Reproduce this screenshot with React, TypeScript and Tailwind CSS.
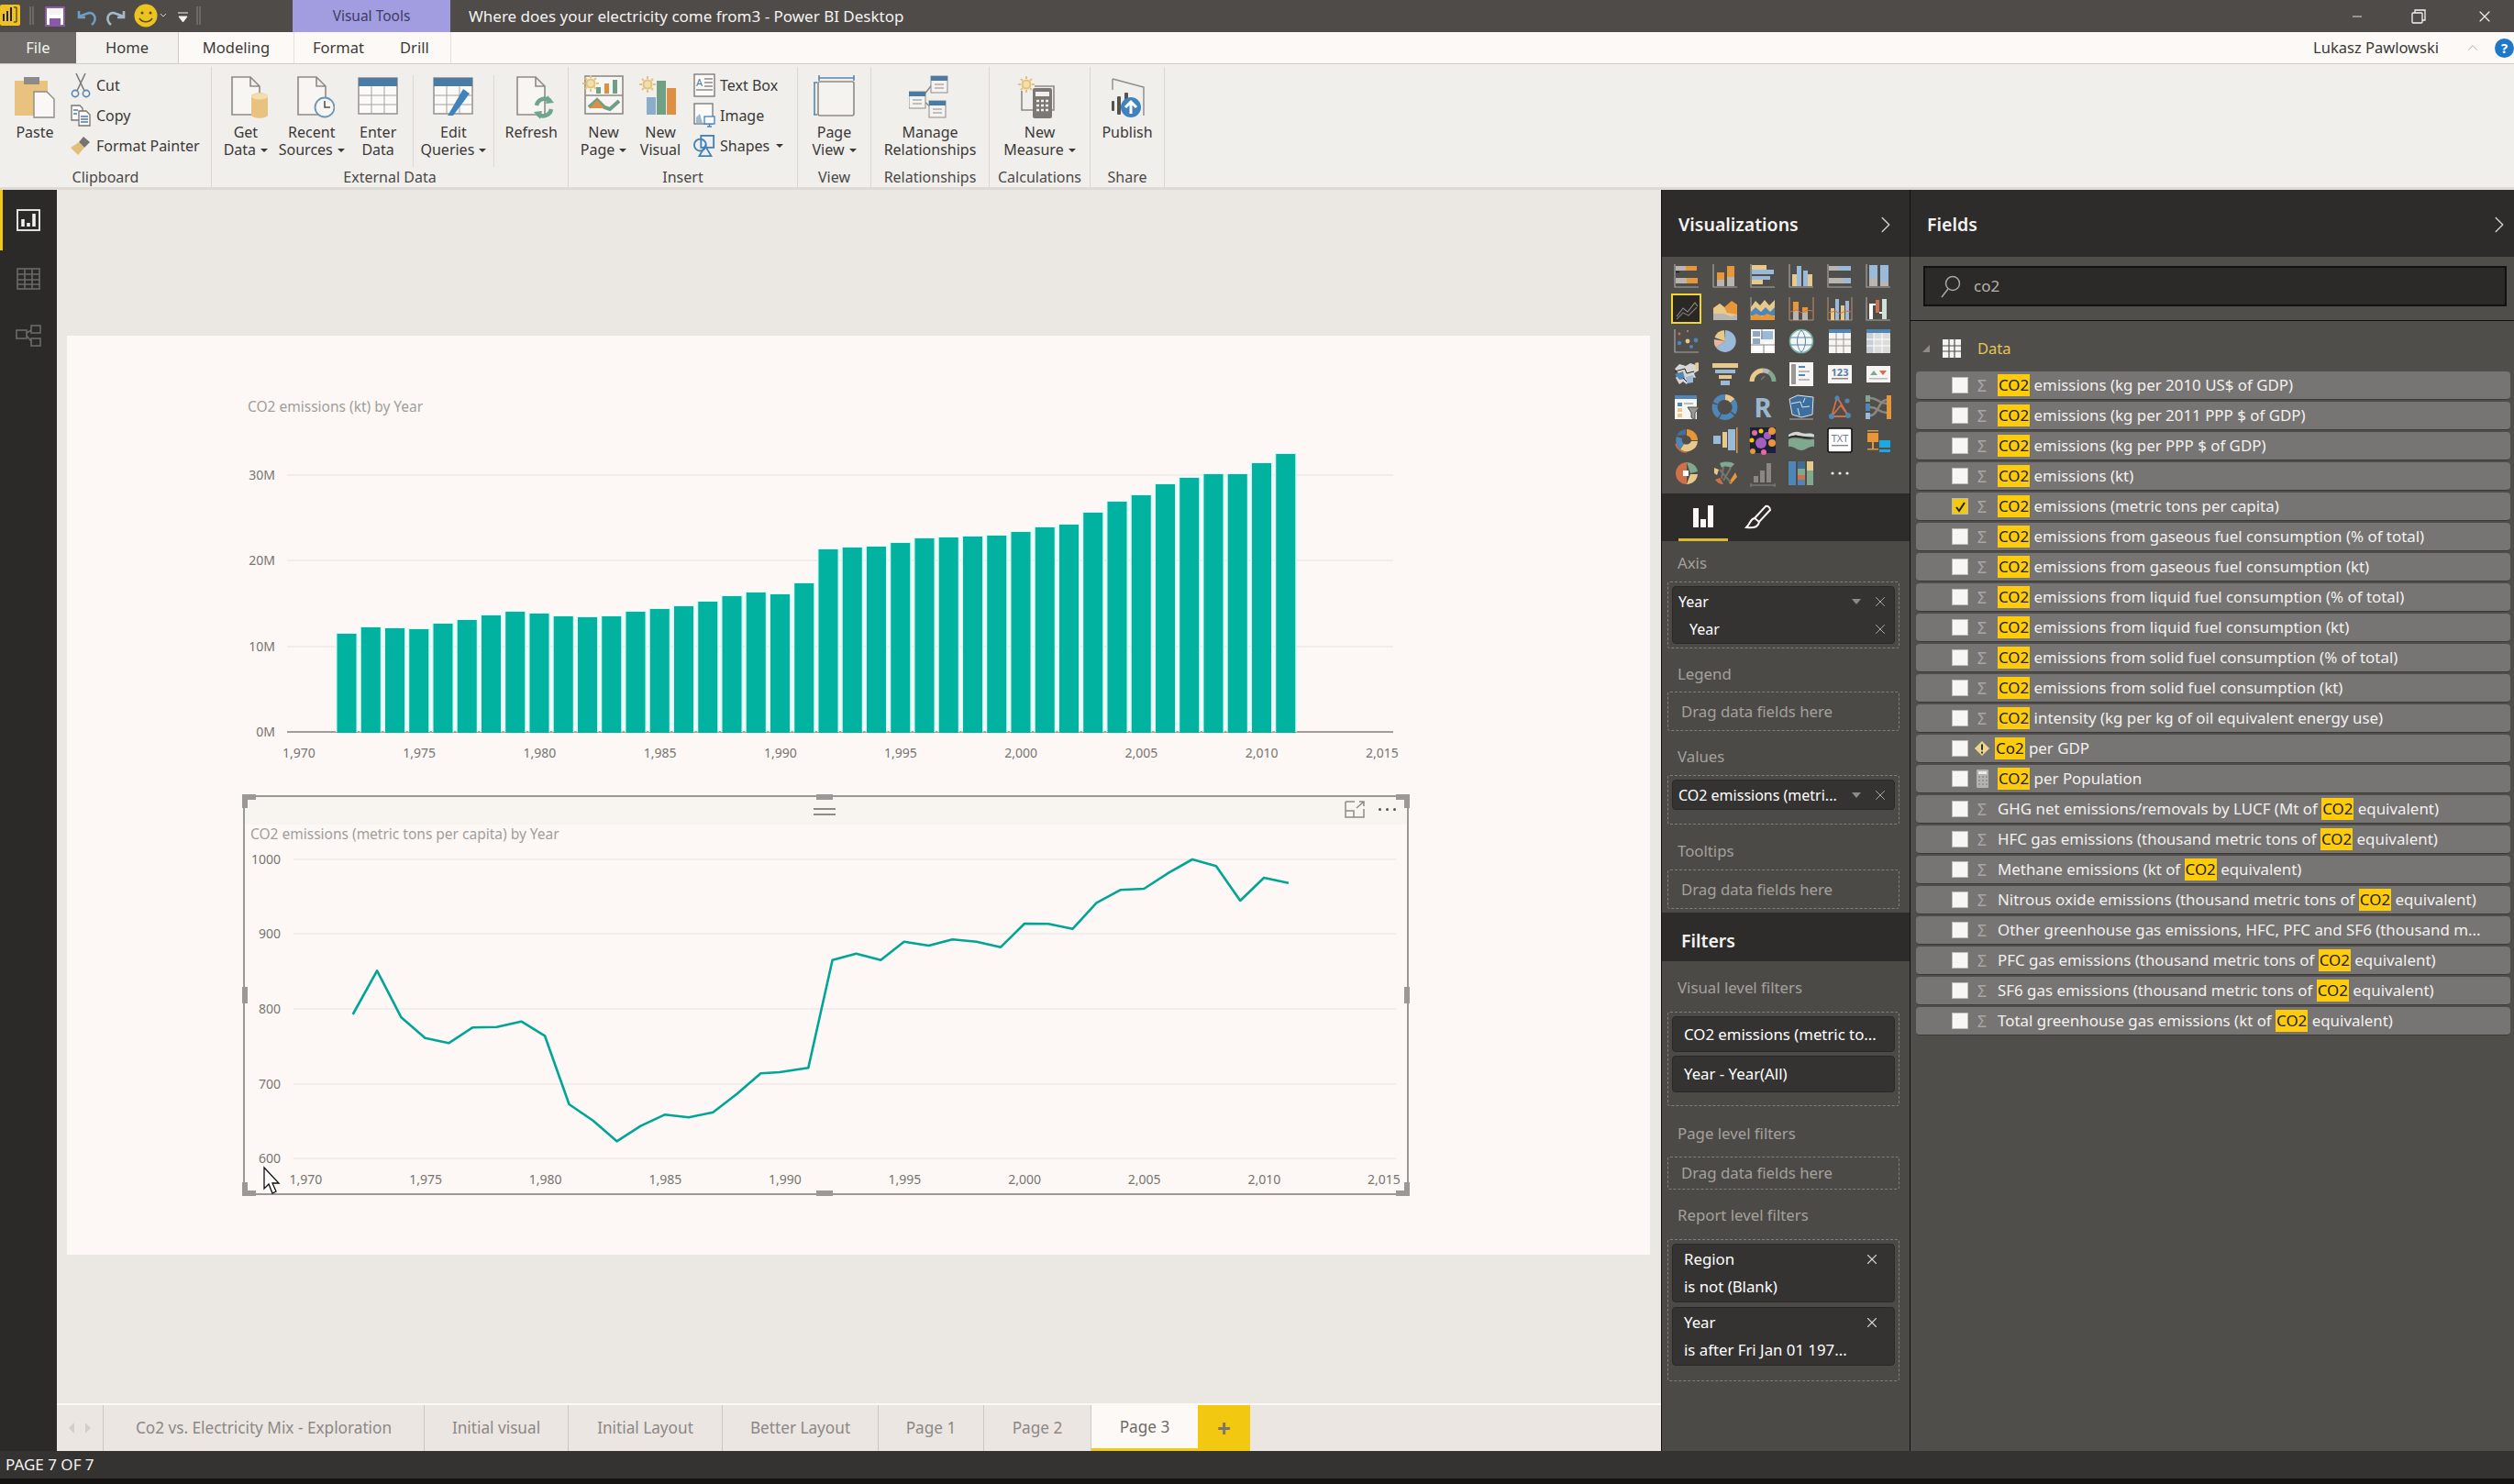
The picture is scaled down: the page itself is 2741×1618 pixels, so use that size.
import type { ReactNode } from 'react';
import { ChevronRight, ChevronUp, Minus, X } from 'lucide-react';

const orange = '#e8963a';
const blue = '#9bb9d9';
const tan = '#e8c98c';
const gray = '#b9b5b0';
const green = '#7fa88f';
const steel = '#4f86b8';
const rust = '#d0704a';

const r = (x: number, y: number, w: number, h: number, f: string) => <rect x={x} y={y} width={w} height={h} fill={f} />;
const axes = <path d="M1 1V26H27" stroke="#a8a5a1" strokeWidth="1.2" fill="none" />;

const vizIcons: ReactNode[] = [
  <>{axes}{r(2, 3, 11, 5, gray)}{r(13, 3, 12, 5, orange)}{r(2, 9, 4, 1, '#111')}{r(2, 16, 12, 6, gray)}{r(14, 16, 12, 6, orange)}</>,
  <>{axes}{r(5, 10, 8, 15, orange)}{r(5, 18, 8, 7, gray)}{r(16, 3, 8, 22, orange)}{r(16, 15, 8, 10, gray)}</>,
  <>{axes}{r(2, 2, 16, 5, tan)}{r(2, 7, 24, 5, blue)}{r(2, 14, 20, 4, blue)}{r(2, 18, 12, 5, tan)}</>,
  <>{axes}{r(4, 12, 5, 13, tan)}{r(9, 3, 5, 22, blue)}{r(16, 8, 5, 17, blue)}{r(21, 12, 5, 13, tan)}</>,
  <>{axes}{r(2, 3, 10, 5, gray)}{r(12, 3, 14, 5, blue)}{r(2, 16, 16, 6, gray)}{r(18, 16, 8, 6, blue)}</>,
  <>{axes}{r(4, 2, 9, 14, blue)}{r(4, 16, 9, 9, gray)}{r(16, 2, 9, 18, blue)}{r(16, 20, 9, 5, gray)}</>,
  <><rect x="0" y="0" width="28" height="28" fill="#292825" /><path d="M3 22L10 13L15 17L23 7L26 11" stroke="#8a8784" strokeWidth="1.2" fill="none" /><path d="M3 25L10 18L16 21L25 12" stroke="#77746f" strokeWidth="1.2" fill="none" /></>,
  <><path d="M1 26V13L8 8L13 12L21 5L27 9V26Z" fill={orange} /><path d="M1 26V13L8 8L13 12L16 18L27 20V26Z" fill={tan} /><path d="M1 26V19L12 19L20 22L27 20V26Z" fill={gray} /></>,
  <><path d="M1 26V1" stroke="#a8a5a1" /><path d="M1 12L6 5L11 10L16 4L21 10L27 4V26H1Z" fill={tan} /><path d="M1 17L6 12L12 17L17 12L22 17L27 12V21H1Z" fill={steel} /><path d="M1 22L7 19L13 22L19 19L27 22V26H1Z" fill={orange} /></>,
  <><path d="M1 1V26H27V1" stroke="#c09068" fill="none" />{r(5, 6, 6, 20, orange)}{r(5, 16, 6, 10, gray)}{r(15, 12, 6, 14, orange)}{r(15, 18, 6, 8, gray)}<path d="M2 17L9 15L14 18L20 15L26 16" stroke={rust} fill="none" /></>,
  <><path d="M1 1V26H27V1" stroke="#c09068" fill="none" />{r(4, 13, 4, 13, tan)}{r(9, 3, 4, 23, blue)}{r(15, 10, 4, 16, tan)}{r(20, 5, 4, 21, blue)}<path d="M2 18L9 16L14 19L20 16L26 17" stroke={rust} fill="none" /></>,
  <>{axes}{r(4, 8, 4, 17, '#fff')}{r(11, 4, 4, 14, rust)}{r(18, 3, 5, 22, '#cfe0d8')}<path d="M8 9H11M15 18H18" stroke="#fff" strokeWidth="2" /></>,
  <>{axes}<g fill={tan}><circle cx="15" cy="14" r="2.4" /></g><g fill={rust}><circle cx="6" cy="6" r="1.4" /><circle cx="15" cy="3" r="1.2" /></g><g fill={steel}><circle cx="6" cy="16" r="2.2" /><circle cx="24" cy="13" r="2.4" /><circle cx="19" cy="20" r="2" /></g></>,
  <><path d="M14 14V2A12 12 0 1 1 4 21Z" fill={blue} /><path d="M14 14L4 21A12 12 0 0 1 2 12Z" fill="#e5b6a2" /><path d="M14 14L2.5 10A12 12 0 0 1 13 2Z" fill={tan} /></>,
  <>{r(1, 1, 26, 26, '#f6f3f0')}{r(3, 3, 8, 6, '#8fa8c0')}{r(12, 3, 13, 9, blue)}{r(3, 11, 8, 6, '#8fa8c0')}{r(3, 19, 11, 6, '#fff')}{r(16, 15, 9, 10, '#fff')}<path d="M13 1V12M1 18H27M15 18V27" stroke="#8a8784" /></>,
  <><circle cx="14" cy="14" r="12.5" fill="#f6f6f2" stroke="#7ab5a8" strokeWidth="1.6" /><path d="M2 10H26M2 18H26M14 2C8 8 8 20 14 26C20 20 20 8 14 2" stroke="#4f86b8" fill="none" /></>,
  <>{r(2, 1, 24, 26, '#f7f5f3')}{r(2, 1, 24, 4, steel)}<path d="M10 5V27M18 5V27M2 12H26M2 19H26" stroke="#99968f" /></>,
  <>{r(1, 1, 26, 26, '#dcdcdc')}{r(1, 1, 26, 4, steel)}{r(1, 5, 8, 22, '#c8ced6')}<path d="M9 5V27M18 5V27M1 12H27M1 19H27" stroke="#fff" /></>,
  <><path d="M1 8L6 3L13 5L18 2L24 4L27 1V10L22 13L24 18L18 17L14 25L10 22L6 25L2 18L5 13Z" fill="#d8d6d2" /><path d="M1 14L10 11L12 19L6 20Z" fill={steel} /><path d="M13 17L21 15L21 23L14 24Z" fill={blue} /><path d="M23 2L26 1L27 8L24 9Z" fill={tan} /><path d="M1 11L12 8L14 13L22 11M10 18L14 22" stroke="#222" fill="none" /></>,
  <>{r(0, 2, 28, 5, tan)}{r(3, 9, 22, 4, blue)}{r(7, 15, 14, 4, tan)}{r(9, 21, 10, 5, blue)}</>,
  <><path d="M2 22A12 12 0 0 1 14 10" stroke={tan} strokeWidth="5" fill="none" /><path d="M14 10A12 12 0 0 1 21 12" stroke={gray} strokeWidth="5" fill="none" /><path d="M21 12A12 12 0 0 1 26 22" stroke={green} strokeWidth="5" fill="none" /><path d="M12 20L16 16" stroke="#777" strokeWidth="1.5" /></>,
  <>{r(1, 1, 26, 26, '#f7f5f3')}{r(3, 3, 5, 22, '#9a9794')}{r(11, 5, 7, 2, steel)}{r(11, 10, 12, 2, '#bbb')}{r(11, 14, 7, 2, steel)}{r(11, 19, 12, 2, '#bbb')}</>,
  <>{r(1, 4, 26, 20, '#f7f5f3')}<text x="14" y="16" fontSize="11" fontWeight="700" fill="#5b7fa3" textAnchor="middle">123</text>{r(5, 18, 18, 1.5, '#888')}</>,
  <>{r(1, 5, 26, 18, '#f7f5f3')}<path d="M5 15L9 10L13 15Z" fill={green} /><path d="M15 10H23L19 15Z" fill={rust} />{r(4, 18, 20, 1.5, '#bbb')}</>,
  <>{r(1, 1, 24, 26, '#f7f5f3')}{r(1, 1, 24, 4, steel)}{r(4, 9, 5, 4, steel)}{r(4, 15, 5, 4, tan)}{r(4, 21, 5, 4, tan)}{r(11, 9, 10, 2, '#bbb')}<path d="M15 14H28L23 20V28L19 25V20Z" fill="#9a9794" stroke="#4f4d4a" /></>,
  <><path d="M14 3A11 11 0 0 1 22 7" stroke={tan} strokeWidth="6" fill="none" /><path d="M22 7A11 11 0 1 1 14 3" stroke={steel} strokeWidth="6" fill="none" strokeDasharray="14 1.5" /></>,
  <text x="14" y="25" fontSize="29" fontWeight="700" fill="#9ab7d0" textAnchor="middle">R</text>,
  <><path d="M1 5L10 1L27 3L26 22L14 25L4 22Z" fill="#3d6f9e" stroke="#dfe5ea" /><path d="M3 10L13 8L15 14L23 13M10 15L12 23M18 4L16 9" stroke="#dfe5ea" fill="none" /><path d="M1 27H27" stroke="#b0aea9" /></>,
  <><path d="M5 24L11 3L23 23L15 12L5 24H23" stroke={rust} strokeWidth="1.8" fill="none" /><g fill={steel}><circle cx="5" cy="24" r="3" /><circle cx="11" cy="4" r="2.6" /><circle cx="23" cy="23" r="3" /><circle cx="22" cy="7" r="2.6" /></g></>,
  <>{r(0, 1, 5, 7, green)}{r(0, 10, 5, 8, steel)}{r(0, 20, 5, 7, blue)}{r(23, 1, 5, 26, orange)}<path d="M5 4C14 4 14 10 23 10M5 14C14 14 14 20 23 20M5 23C14 23 14 6 23 6" stroke="#8a8784" strokeWidth="2.4" fill="none" /></>,
  <><path d="M14 2A12 12 0 0 1 26 14L19 14A6 6 0 0 0 14 9Z" fill={orange} /><path d="M26 15A12 12 0 0 1 7 24L11 18A6 6 0 0 0 19 15Z" fill={tan} /><path d="M7 24A12 12 0 0 1 3 10L9 12A6 6 0 0 0 11 18Z" fill={steel} /><path d="M3 9A12 12 0 0 1 13 2L13 8Z" fill="#456f9a" /><path d="M2 18A12 12 0 0 0 14 27" stroke={rust} strokeWidth="1.6" fill="none" /></>,
  <>{r(1, 9, 8, 9, blue)}{r(11, 5, 5, 17, tan)}{r(17, 2, 8, 23, blue)}{r(26, 0, 1.5, 28, orange)}</>,
  <>{r(0, 0, 28, 28, '#1c2038')}<g fill="#a25fc0"><circle cx="12" cy="17" r="6" /><circle cx="19" cy="9" r="4" /></g><g fill={orange}><circle cx="24" cy="4" r="4" /><circle cx="24" cy="17" r="4" /><circle cx="3" cy="26" r="3" /></g><g fill="#e56a9d"><circle cx="5" cy="6" r="3" /><circle cx="15" cy="27" r="3" /></g><g fill="#f2c811"><circle cx="2" cy="14" r="2.5" /><circle cx="12" cy="4" r="2.5" /></g></>,
  <><path d="M0 8C6 4 10 4 14 6C20 8 24 5 28 8V12C20 10 14 11 8 8L0 11Z" fill="#cfd8d4" /><path d="M0 13C8 9 14 14 28 13V21C22 20 20 25 14 25C8 25 6 20 0 21Z" fill={green} /><path d="M0 11C8 7 14 12 28 11" stroke="#1b1b1b" strokeWidth="1.2" fill="none" /></>,
  <>{r(1, 1, 26, 26, '#fff')}<rect x="1" y="1" width="26" height="26" fill="none" stroke="#111" strokeWidth="1.6" rx="2" /><text x="14" y="16" fontSize="11" fill="#6b7d95" textAnchor="middle">TXT</text>{r(5, 19, 18, 1.4, '#888')}</>,
  <>{r(2, 6, 12, 10, orange)}{r(2, 3, 12, 1.5, orange)}{r(2, 23, 12, 1.5, orange)}{r(7, 16, 2, 7, orange)}{r(15, 14, 12, 8, '#1ea7e0')}{r(15, 24, 12, 3, '#1ea7e0')}</>,
  <><path d="M14 2A12 12 0 0 0 14 26Z" fill={rust} /><path d="M14 2A12 12 0 0 1 26 12L18 14Z" fill={green} /><path d="M14 26A12 12 0 0 0 26 15L18 15Z" fill={tan} />{r(10, 11, 6, 6, '#fff')}</>,
  <><path d="M8 3C14 1 20 1 24 4L20 8C16 6 12 6 10 8Z" fill={green} /><path d="M2 8L7 10L5 16L2 14Z" fill={tan} /><path d="M3 21L8 19L12 26C8 26 5 24 3 21Z" fill={rust} /><path d="M25 13L27 18L20 26L18 24Z" fill={orange} /><path d="M8 10L20 24M12 7L10 20M20 8L12 22" stroke="#77746f" strokeWidth="2" /></>,
  <>{r(4, 17, 5, 7, '#8a8784')}{r(11, 11, 5, 13, '#8a8784')}{r(18, 3, 5, 21, '#8a8784')}<path d="M1 27H27M1 25V29M27 25V29" stroke="#8a8784" /></>,
  <>{r(0, 1, 8, 26, steel)}{r(10, 1, 8, 8, '#3f6d96')}{r(10, 9, 8, 7, green)}{r(10, 16, 8, 5, rust)}{r(10, 21, 8, 6, steel)}{r(20, 1, 7, 10, tan)}{r(20, 11, 7, 16, green)}</>,
  <><circle cx="6" cy="14" r="1.6" fill="#eee" /><circle cx="14" cy="14" r="1.6" fill="#eee" /><circle cx="22" cy="14" r="1.6" fill="#eee" /></>,
];

const years = Array.from({ length: 40 }, (_, i) => 1972 + i);
const barTops = [691, 684, 685, 686, 680, 676, 671, 667, 669, 672, 673, 672, 667, 664, 661, 656, 650, 646, 648, 636, 599, 597, 596, 592, 587, 586, 585, 584, 580, 575, 572, 559, 547, 540, 528, 521, 517, 517, 505, 495];

const linePts: number[][] = [
  [352, 768], [421, 625], [490, 778], [558, 845], [625, 862], [693, 811], [762, 809], [832, 791], [899, 838], [968, 1062], [1036, 1115], [1104, 1183], [1172, 1133], [1240, 1096], [1309, 1105], [1378, 1088], [1446, 1028], [1514, 961],
];
const linePts2: number[][] = [
  [0, 957], [70, 943], [129, 590], [187, 569], [247, 590], [304, 530], [364, 543], [422, 523], [481, 530], [540, 548], [598, 471], [656, 472], [716, 488], [774, 403], [832, 361], [890, 357], [950, 305], [1008, 261], [1066, 283], [1125, 396], [1183, 321], [1243, 338],
];
const linePath = [
  ...linePts.map(([x, y]) => `${(250 + x / 2.613).toFixed(1)},${(850 + y / 3).toFixed(1)}`),
  ...linePts2.map(([x, y]) => `${(850 + x / 2.24).toFixed(1)},${(850 + y / 3).toFixed(1)}`),
].join(' ');

const fields = [
  'CO2 emissions (kg per 2010 US$ of GDP)',
  'CO2 emissions (kg per 2011 PPP $ of GDP)',
  'CO2 emissions (kg per PPP $ of GDP)',
  'CO2 emissions (kt)',
  'CO2 emissions (metric tons per capita)',
  'CO2 emissions from gaseous fuel consumption (% of total)',
  'CO2 emissions from gaseous fuel consumption (kt)',
  'CO2 emissions from liquid fuel consumption (% of total)',
  'CO2 emissions from liquid fuel consumption (kt)',
  'CO2 emissions from solid fuel consumption (% of total)',
  'CO2 emissions from solid fuel consumption (kt)',
  'CO2 intensity (kg per kg of oil equivalent energy use)',
  'Co2 per GDP',
  'CO2 per Population',
  'GHG net emissions/removals by LUCF (Mt of CO2 equivalent)',
  'HFC gas emissions (thousand metric tons of CO2 equivalent)',
  'Methane emissions (kt of CO2 equivalent)',
  'Nitrous oxide emissions (thousand metric tons of CO2 equivalent)',
  'Other greenhouse gas emissions, HFC, PFC and SF6 (thousand m...',
  'PFC gas emissions (thousand metric tons of CO2 equivalent)',
  'SF6 gas emissions (thousand metric tons of CO2 equivalent)',
  'Total greenhouse gas emissions (kt of CO2 equivalent)',
];

const pages = [
  ['Co2 vs. Electricity Mix - Exploration', 'w-[350px]'],
  ['Initial visual', 'w-[157px]'],
  ['Initial Layout', 'w-[168px]'],
  ['Better Layout', 'w-[170px]'],
  ['Page 1', 'w-[115px]'],
  ['Page 2', 'w-[117px]'],
];

function Doc() {
  return <path d="M1 1H21L31 11V42H1Z M21 1V11H31" fill="#f8f6f3" stroke="#8d8a87" strokeWidth="1.6" />;
}

function TableIcon({ pencil }: { pencil?: boolean }) {
  return (
    <svg width="44" height="42" viewBox="0 0 44 42" className="mt-[2px]">
      <rect x="1" y="1" width="42" height="39" fill="#fbfaf8" stroke="#8d8a87" strokeWidth="1.4" />
      <rect x="1" y="1" width="42" height="9" fill="#4a7ba6" />
      <path d="M1 20H43M1 30H43M15 10V40M29 10V40" stroke="#a5a29e" />
      {pencil && <path d="M33 13L40 18L22 42L15 44Z" fill="#3f82bd" />}
    </svg>
  );
}

function Sun({ x, y }: { x: number; y: number }) {
  return (
    <g stroke="#e2c27d" strokeWidth="2" transform={`translate(${x} ${y})`}>
      <circle r="4.5" fill="#f3dfae" />
      <path d="M0 -9V-6M0 6V9M-9 0H-6M6 0H9M-6 -6L-4 -4M4 4L6 6M-6 6L-4 4M4 -4L6 -6" />
    </g>
  );
}

function BigButton({ icon, lines, arrow, w }: { icon: ReactNode; lines: string[]; arrow?: boolean; w: string }) {
  return (
    <div className={`${w} flex flex-col items-center`}>
      <div className="flex h-[50px] items-start justify-center">{icon}</div>
      <div className="mt-[3px] flex flex-col items-center text-[16px] leading-[19px] text-[#3a3937] whitespace-nowrap">
        {lines.map((l, i) => (
          <span key={l} className="flex items-center gap-[5px]">
            {l}
            {arrow && i === lines.length - 1 && <span className="mt-[1px] h-0 w-0 border-x-[4px] border-t-[4px] border-x-transparent border-t-[#3a3937]" />}
          </span>
        ))}
      </div>
    </div>
  );
}

function SmallButton({ icon, label, arrow }: { icon: ReactNode; label: string; arrow?: boolean }) {
  return (
    <div className="flex h-[33px] items-center gap-[5px] text-[16px] text-[#3a3937] whitespace-nowrap">
      <div className="flex w-[24px] justify-center">{icon}</div>
      {label}
      {arrow && <span className="ml-[2px] mt-[1px] h-0 w-0 border-x-[4px] border-t-[4px] border-x-transparent border-t-[#3a3937]" />}
    </div>
  );
}

function Group({ label, w, children }: { label: string; w: string; children: ReactNode }) {
  return (
    <div className={`${w} flex h-[131px] flex-col border-r border-[#dbd8d4] pt-[9px]`}>
      <div className="flex h-[101px]">{children}</div>
      <div className="text-center text-[16px] leading-[20px] text-[#4a4947]">{label}</div>
    </div>
  );
}

function VSep() {
  return <div className="h-[100px] w-px bg-[#dbd8d4]" />;
}

function Ribbon() {
  return (
    <div className="flex h-[137px] border-b-[3px] border-[#dedbd7] bg-[#f1efec] pt-[3px]">
      <Group label="Clipboard" w="w-[231px]">
        <BigButton
          w="w-[76px]"
          lines={['Paste']}
          icon={
            <svg width="46" height="48" viewBox="0 0 46 48">
              <rect x="1" y="6" width="36" height="38" fill="#e9c27f" />
              <rect x="11" y="2" width="17" height="8" fill="#8d8a87" />
              <path d="M22 18H36L44 26V46H22Z" fill="#faf8f6" stroke="#8d8a87" strokeWidth="1.4" />
            </svg>
          }
        />
        <div className="-mt-[6px] flex flex-col">
          <SmallButton
            label="Cut"
            icon={
              <svg width="22" height="28" viewBox="0 0 22 28" fill="none" stroke="#7c7a78" strokeWidth="1.6">
                <path d="M6 1L15 20M16 1L7 20" />
                <circle cx="5" cy="23" r="3.6" stroke="#5b86ab" />
                <circle cx="17" cy="23" r="3.6" stroke="#5b86ab" />
              </svg>
            }
          />
          <SmallButton
            label="Copy"
            icon={
              <svg width="22" height="24" viewBox="0 0 22 24" fill="#fbfaf8" stroke="#77746f" strokeWidth="1.3">
                <path d="M1 1H10L13 4V17H1Z" />
                <path d="M9 7H17L21 11V23H9Z" />
                <path d="M3 6H8M3 10H7M11 13H19M11 16H19M11 19H19" stroke="#4a7ba6" />
              </svg>
            }
          />
          <SmallButton
            label="Format Painter"
            icon={
              <svg width="24" height="24" viewBox="0 0 24 24">
                <path d="M15 2L22 8L16 14L10 8Z" fill="#77746f" />
                <path d="M10 8L16 14L9 22L1 14Z" fill="#e2bd7c" />
              </svg>
            }
          />
        </div>
      </Group>
      <Group label="External Data" w="w-[389px]">
        <BigButton
          w="w-[74px]"
          lines={['Get', 'Data']}
          arrow
          icon={
            <svg width="50" height="48" viewBox="0 0 50 48">
              <g transform="translate(9 1)"><Doc /></g>
              <path d="M31 23C31 18 49 18 49 23V43C49 48 31 48 31 43Z" fill="#e9c27f" />
              <ellipse cx="40" cy="23" rx="9" ry="3.5" fill="#f3dfae" />
            </svg>
          }
        />
        <BigButton
          w="w-[70px]"
          lines={['Recent', 'Sources']}
          arrow
          icon={
            <svg width="50" height="48" viewBox="0 0 50 48">
              <g transform="translate(9 1)"><Doc /></g>
              <circle cx="39" cy="35" r="10.5" fill="#f8f6f3" stroke="#6b95ba" strokeWidth="1.8" />
              <path d="M39 28V35H45" stroke="#55534f" strokeWidth="1.6" fill="none" />
            </svg>
          }
        />
        <BigButton w="w-[75px]" lines={['Enter', 'Data']} icon={<TableIcon />} />
        <VSep />
        <BigButton w="w-[88px]" lines={['Edit', 'Queries']} arrow icon={<TableIcon pencil />} />
        <VSep />
        <BigButton
          w="w-[80px]"
          lines={['Refresh']}
          icon={
            <svg width="50" height="48" viewBox="0 0 50 48">
              <g transform="translate(9 1)"><Doc /></g>
              <path d="M31 33A9 9 0 0 1 46 28M47 37A9 9 0 0 1 32 42" stroke="#6fa48f" strokeWidth="4.5" fill="none" />
              <path d="M43 22L50 30L41 31ZM35 48L28 40L37 39Z" fill="#6fa48f" />
            </svg>
          }
        />
      </Group>
      <Group label="Insert" w="w-[250px]">
        <BigButton
          w="w-[76px]"
          lines={['New', 'Page']}
          arrow
          icon={
            <svg width="46" height="48" viewBox="0 0 46 48">
              <rect x="3" y="1" width="41" height="41" fill="#f8f6f3" stroke="#8d8a87" strokeWidth="1.6" />
              <path d="M3 22H44" stroke="#8d8a87" strokeWidth="1.6" />
              <rect x="15" y="13" width="5" height="7" fill="#6f9f85" />
              <rect x="24" y="9" width="5" height="11" fill="#df8f43" />
              <rect x="33" y="5" width="5" height="15" fill="#6f9f85" />
              <path d="M7 35L16 27L24 35L30 37L40 28" stroke="#6f9f85" strokeWidth="4" fill="none" />
              <path d="M8 36L16 27L24 36Z" fill="#df8f43" />
              <Sun x={9} y={9} />
            </svg>
          }
        />
        <BigButton
          w="w-[48px]"
          lines={['New', 'Visual']}
          icon={
            <svg width="46" height="48" viewBox="0 0 46 48">
              <rect x="8" y="24" width="10" height="19" fill="#89adcb" />
              <rect x="19" y="6" width="10" height="37" fill="#6f9f85" />
              <rect x="30" y="14" width="10" height="29" fill="#df8f43" />
              <Sun x={9} y={10} />
            </svg>
          }
        />
        <div className="-mt-[6px] ml-[12px] flex flex-col">
          <SmallButton
            label="Text Box"
            icon={
              <svg width="24" height="26" viewBox="0 0 24 26" fill="#fbfaf8" stroke="#77746f" strokeWidth="1.3">
                <rect x="1" y="1" width="22" height="24" />
                <text x="3" y="14" fontSize="11" fill="#4a7ba6" stroke="none">A</text>
                <path d="M12 6H21M12 10H21M12 14H21M3 18H21" stroke="#8d8a87" />
              </svg>
            }
          />
          <SmallButton
            label="Image"
            icon={
              <svg width="24" height="28" viewBox="0 0 24 28" fill="#fbfaf8" stroke="#77746f" strokeWidth="1.3">
                <rect x="1" y="1" width="20" height="22" />
                <path d="M3 22V16L7 12L10 22Z" fill="#9bb9d9" stroke="none" />
                <rect x="12" y="15" width="11" height="8" stroke="#3f82bd" />
                <path d="M15 26H20M17.5 23V26" stroke="#3f82bd" />
              </svg>
            }
          />
          <SmallButton
            label="Shapes"
            arrow
            icon={
              <svg width="26" height="28" viewBox="0 0 26 28" fill="none" stroke="#3f82bd" strokeWidth="2">
                <circle cx="8" cy="13" r="7" />
                <rect x="9" y="2" width="15" height="14" />
                <path d="M7 26L14 14L21 26Z" />
              </svg>
            }
          />
        </div>
      </Group>
      <Group label="View" w="w-[80px]">
        <BigButton
          w="w-full"
          lines={['Page', 'View']}
          arrow
          icon={
            <svg width="46" height="48" viewBox="0 0 46 48" fill="none">
              <path d="M6 3H44M6 0V6M44 0V6M1 8V43M-2 8H4M-2 43H4" stroke="#5b86ab" strokeWidth="1.6" />
              <rect x="5" y="7" width="39" height="37" rx="2" fill="#f5f3f0" stroke="#8d8a87" strokeWidth="1.6" />
            </svg>
          }
        />
      </Group>
      <Group label="Relationships" w="w-[129px]">
        <BigButton
          w="w-full"
          lines={['Manage', 'Relationships']}
          icon={
            <svg width="46" height="48" viewBox="0 0 46 48">
              <path d="M16 22L27 8M16 28L27 38" stroke="#8d8a87" strokeWidth="1.6" />
              {[
                [24, 1],
                [0, 18],
                [22, 28],
              ].map(([x, y]) => (
                <g key={x + y * 10} transform={`translate(${x} ${y})`}>
                  <rect width="18" height="18" fill="#f5f3f0" stroke="#8d8a87" />
                  <rect width="18" height="5" fill="#4a7ba6" />
                  <path d="M4 9H14M4 13H14" stroke="#8d8a87" />
                </g>
              ))}
            </svg>
          }
        />
      </Group>
      <Group label="Calculations" w="w-[110px]">
        <BigButton
          w="w-full"
          lines={['New', 'Measure']}
          arrow
          icon={
            <svg width="50" height="48" viewBox="0 0 50 48">
              <path d="M5 17V38H40V12H19" stroke="#8d8a87" strokeWidth="1.6" fill="none" />
              <rect x="17" y="14" width="21" height="33" rx="2" fill="#7b7875" />
              <rect x="20" y="18" width="15" height="5" fill="#f1efec" />
              <path d="M21 28H24M26 28H29M31 28H34M21 33H24M26 33H29M31 33H34M21 38H24M26 38H29M31 38H34" stroke="#f1efec" strokeWidth="2.4" />
              <Sun x={10} y={10} />
            </svg>
          }
        />
      </Group>
      <Group label="Share" w="w-[81px]">
        <BigButton
          w="w-full"
          lines={['Publish']}
          icon={
            <svg width="46" height="48" viewBox="0 0 46 48">
              <path d="M7 4L41 13V44" stroke="#8d8a87" strokeWidth="1.4" fill="none" />
              <path d="M7 4V16" stroke="#8d8a87" strokeWidth="1.4" />
              <rect x="6" y="28" width="3" height="11" rx="1" fill="#55534f" />
              <rect x="12" y="23" width="4" height="20" rx="1" fill="#55534f" />
              <rect x="20" y="19" width="4" height="8" rx="1" fill="#55534f" />
              <circle cx="27" cy="35" r="11" fill="#3f82bd" />
              <path d="M27 42V29M21 35L27 29L33 35" stroke="#fff" strokeWidth="3" fill="none" />
            </svg>
          }
        />
      </Group>
    </div>
  );
}

function BarChart() {
  const ticks = [0, 1, 2, 3, 4, 5, 6, 7, 8, 9];
  return (
    <svg width="1290" height="420" viewBox="250 430 1290 420" className="ml-[177px] block">
      <text x="270" y="449" fontSize="15.5" fill="#a19e9b">CO2 emissions (kt) by Year</text>
      {[
        ['30M', 518],
        ['20M', 611],
        ['10M', 705],
      ].map(([l, y]) => (
        <g key={l}>
          <line x1="313" x2="1519" y1={y} y2={y} stroke="#eceae7" strokeWidth="1.5" />
          <text x="300" y={Number(y) + 5} fontSize="14" fill="#77746f" textAnchor="end">{l}</text>
        </g>
      ))}
      <text x="300" y="803" fontSize="14" fill="#77746f" textAnchor="end">0M</text>
      <line x1="313" x2="1519" y1="798" y2="798" stroke="#a09d9a" strokeWidth="2" />
      {years.map((y, i) => (
        <g key={y}>
          <rect x={366 + i * 26.25} y={barTops[i] - 1} width="24" height={799 - barTops[i]} fill="#d3fbf4" />
          <rect x={367.5 + i * 26.25} y={barTops[i]} width="21" height={799 - barTops[i]} fill="#01b2a1" />
        </g>
      ))}
      {ticks.map((t) => (
        <text key={t} x={326 + t * 131.2} y="826" fontSize="14" fill="#77746f" textAnchor="middle">
          {`${1970 + t * 5}`.replace(/^(\d)/, '$1,')}
        </text>
      ))}
    </svg>
  );
}

function Handle({ className }: { className: string }) {
  return <div className={`absolute bg-[#9b9896] ${className}`} />;
}

function LineChart() {
  const ticks = [0, 1, 2, 3, 4, 5, 6, 7, 8, 9];
  return (
    <div className="relative ml-[192px] mt-[17px] h-[436px] w-[1271px] border-2 border-[#9b9896]">
      <div className="h-[30px] bg-[#f8f5f0]" />
      <svg width="1267" height="404" viewBox="267 899 1267 404" className="block">
        <text x="273" y="915" fontSize="15.5" fill="#a19e9b">CO2 emissions (metric tons per capita) by Year</text>
        {[
          ['1000', 937],
          ['900', 1018],
          ['800', 1100],
          ['700', 1182],
          ['600', 1263],
        ].map(([l, y]) => (
          <g key={l}>
            <line x1="320" x2="1522" y1={y} y2={y} stroke="#eceae7" strokeWidth="1.5" />
            <text x="306" y={Number(y) + 5} fontSize="14" fill="#77746f" textAnchor="end">{l}</text>
          </g>
        ))}
        <polyline points={linePath} fill="none" stroke="#01a596" strokeWidth="2.6" strokeLinejoin="round" />
        {ticks.map((t) => (
          <text key={t} x={333.5 + t * 130.6} y="1291" fontSize="14" fill="#77746f" textAnchor="middle">
            {`${1970 + t * 5}`.replace(/^(\d)/, '$1,')}
          </text>
        ))}
        <path d="M288 1273V1296L293 1291L297 1301L301 1299L297 1290H304Z" fill="#fff" stroke="#111" strokeWidth="1.3" />
      </svg>
      <Handle className="-left-[3px] -top-[3px] h-[6px] w-[15px]" />
      <Handle className="-left-[3px] -top-[3px] h-[15px] w-[6px]" />
      <Handle className="-right-[3px] -top-[3px] h-[6px] w-[15px]" />
      <Handle className="-right-[3px] -top-[3px] h-[15px] w-[6px]" />
      <Handle className="-left-[3px] -bottom-[3px] h-[6px] w-[15px]" />
      <Handle className="-left-[3px] -bottom-[3px] h-[15px] w-[6px]" />
      <Handle className="-right-[3px] -bottom-[3px] h-[6px] w-[15px]" />
      <Handle className="-right-[3px] -bottom-[3px] h-[15px] w-[6px]" />
      <Handle className="-top-[3px] left-[623px] h-[6px] w-[18px]" />
      <Handle className="-bottom-[3px] left-[623px] h-[6px] w-[18px]" />
      <Handle className="-left-[3px] top-[207px] h-[18px] w-[6px]" />
      <Handle className="-right-[3px] top-[207px] h-[18px] w-[6px]" />
      <div className="absolute left-[620px] top-[12px] h-[8px] w-[24px] border-y-2 border-[#8d8a87]" />
      <div className="absolute right-[12px] top-[4px] flex items-center gap-[15px]">
        <svg width="22" height="19" viewBox="0 0 22 19" fill="none" stroke="#8d8a87" strokeWidth="1.5">
          <path d="M1 1H11M1 1V18H21V9M1 11H10V18M13 8L21 1M16 1H21V6" />
        </svg>
        <div className="flex gap-[5px]">
          <span className="size-[3px] rounded-full bg-[#55534f]" />
          <span className="size-[3px] rounded-full bg-[#55534f]" />
          <span className="size-[3px] rounded-full bg-[#55534f]" />
        </div>
      </div>
    </div>
  );
}

function WellLabel({ text, mt }: { text: string; mt: string }) {
  return <div className={`${mt} pl-[11px] text-[16.8px] leading-[20px] text-[#a4a19d]`}>{text}</div>;
}

function Well({ h, mt, children }: { h: string; mt: string; children?: ReactNode }) {
  return <div className={`${h} ${mt} flex w-[253px] flex-col rounded-[3px] border border-dashed border-[#827f7b] px-[4px] pt-[4px]`}>{children}</div>;
}

function EmptyWell({ h, mt }: { h: string; mt: string }) {
  return (
    <div className={`${h} ${mt} flex w-[253px] items-center rounded-[3px] border border-dashed border-[#827f7b] pl-[14px] text-[16.8px] text-[#a4a19d]`}>
      Drag data fields here
    </div>
  );
}

function WellCloseRow({ label, indent, caret }: { label: string; indent?: boolean; caret?: boolean }) {
  return (
    <div className="flex h-[30px] items-center pr-[6px] text-[16px] text-white">
      <span className={indent ? 'pl-[18px]' : 'pl-[6px]'}>{label}</span>
      {caret && <span className="ml-auto mr-[12px] h-0 w-0 border-x-[5px] border-t-[6px] border-x-transparent border-t-[#8d8a87]" />}
      <X size={18} strokeWidth={1.3} className={`text-[#b0aeab] ${caret ? '' : 'ml-auto'}`} />
    </div>
  );
}

function FilterCard({ h, l1, l2, close }: { h: string; l1: string; l2?: string; close?: boolean }) {
  return (
    <div className={`${h} flex flex-col justify-center rounded-[4px] border border-[#2a2927] bg-[#353331] pl-[12px] pr-[15px] text-[16.8px] leading-[30px] text-white`}>
      <div className="flex items-center justify-between whitespace-nowrap">
        {l1}
        {close && <X size={18} strokeWidth={1.5} className="text-[#d5d3d0]" />}
      </div>
      {l2 && <div className="whitespace-nowrap">{l2}</div>}
    </div>
  );
}

function VizPanel() {
  return (
    <div className="flex w-[272px] flex-col border-x border-[#111] bg-[#4c4a47]">
      <div className="flex h-[73px] items-center justify-between bg-[#2d2c2a] pl-[18px] pr-[11px] pt-[2px] text-[19.5px] font-semibold text-[#f4f3f1]">
        Visualizations
        <ChevronRight size={30} strokeWidth={1.2} className="text-[#cfcdca]" />
      </div>
      <div className="grid h-[258px] grid-cols-[repeat(6,41.8px)] auto-rows-[35.8px] items-center justify-items-center bg-[#504e4b] pl-[6px] pt-[3px]">
        {vizIcons.map((ic, i) => (
          <div key={i} className={i === 6 ? 'flex size-[33px] items-center justify-center border-2 border-[#f2d629] bg-[#292825]' : ''}>
            <svg width="28" height="28" viewBox="0 0 28 28" className="block overflow-visible">{ic}</svg>
          </div>
        ))}
      </div>
      <div className="flex h-[52px] bg-[#2d2c2a]">
        <div className="ml-[18px] flex h-[52px] w-[54px] items-center justify-center border-b-[3px] border-[#d8bb2e]">
          <svg width="22" height="24" viewBox="0 0 22 24" fill="#fbf8f6">
            <rect x="0" y="3" width="6" height="21" />
            <rect x="8" y="15" width="6" height="9" />
            <rect x="16" y="0" width="6" height="24" />
          </svg>
        </div>
        <div className="ml-[18px] flex h-[52px] items-center">
          <svg width="30" height="28" viewBox="0 0 30 28" fill="none" stroke="#fbf8f6" strokeWidth="2">
            <path d="M11 15L23 2C25 1 28 3 28 6L16 19Z" />
            <path d="M11 15C6 16 7 20 2 25C9 26 15 25 16 19" />
          </svg>
        </div>
      </div>
      <div className="flex h-[405px] flex-col pl-[6px]">
        <WellLabel text="Axis" mt="mt-[14px]" />
        <Well h="h-[73px]" mt="mt-[10px]">
          <div className="flex h-[63px] flex-col justify-center rounded-[4px] border border-[#2a2927] bg-[#353331]">
            <WellCloseRow label="Year" caret />
            <WellCloseRow label="Year" indent />
          </div>
        </Well>
        <WellLabel text="Legend" mt="mt-[18px]" />
        <EmptyWell h="h-[43px]" mt="mt-[9px]" />
        <WellLabel text="Values" mt="mt-[18px]" />
        <Well h="h-[54px]" mt="mt-[10px]">
          <div className="flex h-[33px] flex-col justify-center rounded-[4px] border border-[#2a2927] bg-[#353331]">
            <WellCloseRow label="CO2 emissions (metri..." caret />
          </div>
        </Well>
        <WellLabel text="Tooltips" mt="mt-[19px]" />
        <EmptyWell h="h-[43px]" mt="mt-[10px]" />
      </div>
      <div className="flex h-[53px] items-center bg-[#2d2c2a] pl-[21px] pt-[8px] text-[19.5px] font-semibold text-[#f4f3f1]">Filters</div>
      <div className="flex flex-1 flex-col pl-[6px]">
        <WellLabel text="Visual level filters" mt="mt-[19px]" />
        <Well h="h-[103px]" mt="mt-[16px]">
          <div className="flex flex-col gap-[4px]">
            <FilterCard h="h-[39px]" l1="CO2 emissions (metric to..." />
            <FilterCard h="h-[40px]" l1="Year - Year(All)" />
          </div>
        </Well>
        <WellLabel text="Page level filters" mt="mt-[20px]" />
        <EmptyWell h="h-[36px]" mt="mt-[15px]" />
        <WellLabel text="Report level filters" mt="mt-[18px]" />
        <Well h="h-[155px]" mt="mt-[16px]">
          <div className="flex flex-col gap-[5px]">
            <FilterCard h="h-[64px]" l1="Region" l2="is not (Blank)" close />
            <FilterCard h="h-[64px]" l1="Year" l2="is after Fri Jan 01 197..." close />
          </div>
        </Well>
      </div>
    </div>
  );
}

function FieldText({ text }: { text: string }) {
  const parts = text.split(/(CO2|Co2)/);
  return (
    <span className="whitespace-nowrap">
      {parts.map((p, i) =>
        p === 'CO2' || p === 'Co2' ? (
          <span key={i} className="inline-block h-[24px] bg-[#ffcc0c] px-[1px] leading-[24px] text-[#222]">{p}</span>
        ) : (
          <span key={i}>{p}</span>
        ),
      )}
    </span>
  );
}

function FieldRow({ text, checked }: { text: string; checked: boolean }) {
  const warn = text === 'Co2 per GDP';
  const calc = text === 'CO2 per Population';
  return (
    <div className="flex h-[31px] items-center rounded-[4px] border-b border-[#3c3a38] bg-[#777573] pl-[39px] text-[16.9px] text-[#f3f1ef]">
      <div className={`flex size-[18px] items-center justify-center border border-[#bdbbb8] ${checked ? 'bg-[#f2c811]' : 'bg-[#f8f6f4]'}`}>
        {checked && (
          <svg width="13" height="13" viewBox="0 0 13 13" fill="none" stroke="#222" strokeWidth="2">
            <path d="M2 7L5 11L11 2" />
          </svg>
        )}
      </div>
      <div className="ml-[6px] flex w-[18px] justify-center">
        {warn ? (
          <svg width="20" height="20" viewBox="0 0 20 20">
            <path d="M10 1L19 10L10 19L1 10Z" fill="#ecd58d" />
            <path d="M10 5V12M10 14V16" stroke="#222" strokeWidth="2" />
          </svg>
        ) : calc ? (
          <svg width="13" height="20" viewBox="0 0 13 20">
            <rect width="13" height="20" rx="1" fill="#b5b3b0" />
            <rect x="2" y="2" width="9" height="3" fill="#ecebe9" />
            <path d="M2 8H4M6 8H8M10 8H12M2 12H4M6 12H8M10 12H12M2 16H4M6 16H8M10 16H12" stroke="#77746f" />
          </svg>
        ) : (
          <span className="text-[18px] text-[#a9a7a5]">Σ</span>
        )}
      </div>
      <div className={warn ? 'ml-[5px]' : 'ml-[8px]'}>
        <FieldText text={text} />
      </div>
    </div>
  );
}

function FieldsPanel() {
  return (
    <div className="flex flex-1 flex-col bg-[#504e4b]">
      <div className="flex h-[73px] items-center justify-between bg-[#2d2c2a] pl-[18px] pr-[1px] pt-[2px] text-[19.5px] font-semibold text-[#f4f3f1]">
        Fields
        <ChevronRight size={30} strokeWidth={1.2} className="text-[#cfcdca]" />
      </div>
      <div className="h-[70px] border-b border-[#111] pl-[14px] pt-[10px]">
        <div className="flex h-[44px] w-[636px] items-center gap-[13px] border-2 border-[#111] bg-[#2b2a28] pl-[16px] text-[17px] text-[#b5b3b0]">
          <svg width="24" height="26" viewBox="0 0 24 26" fill="none" stroke="#a9a7a5" strokeWidth="1.5">
            <circle cx="14" cy="10" r="7.5" />
            <path d="M9 16L2 25" />
          </svg>
          co2
        </div>
      </div>
      <div className="flex h-[55px] items-center pl-[13px] pt-[5px] text-[16.5px] text-[#e3c55a]">
        <span className="h-0 w-0 border-b-[8px] border-l-[8px] border-b-[#8d8a87] border-l-transparent" />
        <svg width="20" height="20" viewBox="0 0 20 20" className="ml-[14px]" fill="#f4f3f1">
          <rect width="20" height="20" />
          <path d="M0 7H20M0 13H20M7 0V20M13 0V20" stroke="#504e4b" strokeWidth="1.2" />
        </svg>
        <span className="ml-[18px]">Data</span>
      </div>
      <div className="flex flex-col gap-[2px] pl-[6px] pr-[4px]">
        {fields.map((f, i) => (
          <FieldRow key={f} text={f} checked={i === 4} />
        ))}
      </div>
    </div>
  );
}

export default function App() {
  return (
    <div className="flex h-[1618px] w-[2741px] flex-col overflow-hidden bg-[#2b2a28] font-['Noto_Sans','Liberation_Sans',sans-serif]">
      <div className="flex h-[35px] items-center bg-[#4f4b48] text-[17px] text-[#f4f3f1]">
        <svg width="319" height="35" viewBox="0 0 319 35">
          <rect x="0" y="5" width="22" height="23" rx="2" fill="#eec223" />
          <path d="M4 23V15M8 23V12M12 23V8" stroke="#222" strokeWidth="2" />
          <path d="M15 8H18V24H15" stroke="#222" fill="none" />
          <path d="M33 7V27M36 7V27M215 7V27M218 7V27" stroke="#8a8784" />
          <rect x="50" y="8" width="20" height="20" fill="#fff" stroke="#8a5aa8" strokeWidth="2" />
          <rect x="54" y="20" width="12" height="7" fill="#8a5aa8" />
          <rect x="54" y="9" width="12" height="7" fill="#f5f3f0" />
          <path d="M86 18L97 14C104 14 106 22 100 27M86 12V19H93" stroke="#6d9ec7" strokeWidth="2.6" fill="none" />
          <path d="M135 18L124 14C117 14 115 22 121 27M135 12V19H128" stroke="#a3b9ca" strokeWidth="2.6" fill="none" />
          <circle cx="159" cy="17" r="12.5" fill="#edc41f" />
          <circle cx="155" cy="14" r="1.5" fill="#5b4a10" />
          <circle cx="164" cy="14" r="1.5" fill="#5b4a10" />
          <path d="M152 20C155 25 163 25 166 20" stroke="#5b4a10" strokeWidth="1.5" fill="none" />
          <path d="M175 15L178 18L181 15" stroke="#d5d3d0" fill="none" />
          <path d="M194 14H205M195 18H204L199.500 24Z" stroke="#f4f3f1" fill="#f4f3f1" />
        </svg>
        <div className="flex h-[35px] w-[172px] items-center justify-center bg-[#a29ce0] text-[15.5px] text-[#3e3c62]">Visual Tools</div>
        <div className="ml-[20px]">Where does your electricity come from3 - Power BI Desktop</div>
        <div className="ml-auto flex items-center">
          <Minus size={16} strokeWidth={1.3} className="mr-[51px]" />
          <svg width="16" height="16" viewBox="0 0 16 16" fill="none" stroke="#f4f3f1" strokeWidth="1.3" className="mr-[54px]">
            <rect x="1" y="4" width="11" height="11" rx="1" />
            <path d="M4 4V1H15V12H12" />
          </svg>
          <X size={20} strokeWidth={1.4} className="mr-[22px]" />
        </div>
      </div>
      <div className="flex h-[35px] border-b border-[#cfcdc9] bg-[#fdf9f6] text-[16.5px] text-[#3a3937]">
        <div className="flex w-[83px] items-center justify-center bg-[#6e6b68] text-[#f4f3f1]">File</div>
        <div className="flex w-[112px] items-center justify-center border-r border-[#cfcdc9] bg-[#f3f1ee]">Home</div>
        <div className="flex w-[125px] items-center justify-center">Modeling</div>
        <div className="flex w-[172px] items-center gap-[39px] border-x border-[#e6e3df] pl-[20px]">
          <span>Format</span>
          <span>Drill</span>
        </div>
        <div className="ml-auto flex items-center text-[16.5px]">
          <span>Lukasz Pawlowski</span>
          <ChevronUp size={18} strokeWidth={1.2} className="ml-[28px] mr-[15px] text-[#a8a5a1]" />
          <span className="flex size-[21px] items-center justify-center rounded-full bg-[#1e78c8] text-[15px] font-bold leading-none text-white">?</span>
        </div>
      </div>
      <Ribbon />
      <div className="flex h-[1375px]">
        <div className="flex w-[62px] flex-col bg-[#2b2a28]">
          <div className="flex h-[66px] items-center justify-center border-l-[3px] border-[#f2c811] pr-[3px]">
            <svg width="26" height="24" viewBox="0 0 26 24" fill="none" stroke="#f4f3f1" strokeWidth="1.8">
              <rect x="1" y="1" width="24" height="22" />
              <path d="M7 19V11M13 19V15M19 19V5" strokeWidth="3.5" />
            </svg>
          </div>
          <div className="flex h-[62px] items-center justify-center">
            <svg width="26" height="24" viewBox="0 0 26 24" fill="none" stroke="#6c6a67" strokeWidth="1.6">
              <rect x="1" y="1" width="24" height="22" />
              <path d="M1 7H25M1 13H25M1 18H25M9 1V23M17 1V23" />
            </svg>
          </div>
          <div className="flex h-[62px] items-center justify-center">
            <svg width="28" height="24" viewBox="0 0 28 24" fill="none" stroke="#6c6a67" strokeWidth="1.6">
              <rect x="1" y="6" width="11" height="9" />
              <rect x="17" y="1" width="10" height="8" />
              <rect x="17" y="15" width="10" height="8" />
              <path d="M12 9L17 6M12 12L17 18" />
            </svg>
          </div>
        </div>
        <div className="flex w-[1749px] flex-col">
          <div className="h-[1323px] bg-[#ebe7e3] pl-[11px] pt-[159px]">
            <div className="flex h-[1002px] w-[1726px] flex-col bg-[#fdf8f5] pt-[64px]">
              <BarChart />
              <LineChart />
            </div>
          </div>
          <div className="flex h-[52px] border-t-2 border-[#fbf8f5] bg-[#ebe6e2] text-[17.2px] text-[#8b8885]">
            <div className="flex w-[51px] items-center justify-center gap-[12px] border-r border-[#cbc8c4] text-[#c8c5c1]">
              <span className="h-0 w-0 border-y-[6px] border-r-[6px] border-y-transparent border-r-[#d2cfcb]" />
              <span className="h-0 w-0 border-y-[6px] border-l-[6px] border-y-transparent border-l-[#d2cfcb]" />
            </div>
            {pages.map(([p, w]) => (
              <div key={p} className={`${w} flex items-center justify-center whitespace-nowrap border-r border-[#cbc8c4]`}>{p}</div>
            ))}
            <div className="flex w-[116px] items-center justify-center border-b-[3px] border-[#f2c811] bg-[#fdf9f6] text-[#6e6b68]">Page 3</div>
            <div className="flex w-[57px] items-center justify-center bg-[#f2c811] text-[26px] font-bold leading-none text-[#7d7668]">+</div>
          </div>
        </div>
        <VizPanel />
        <FieldsPanel />
      </div>
      <div className="flex h-[30px] items-center bg-[#353331] pl-[6px] text-[17px] text-[#f4f3f1]">PAGE 7 OF 7</div>
      <div className="h-[6px] bg-[#141312]" />
    </div>
  );
}
